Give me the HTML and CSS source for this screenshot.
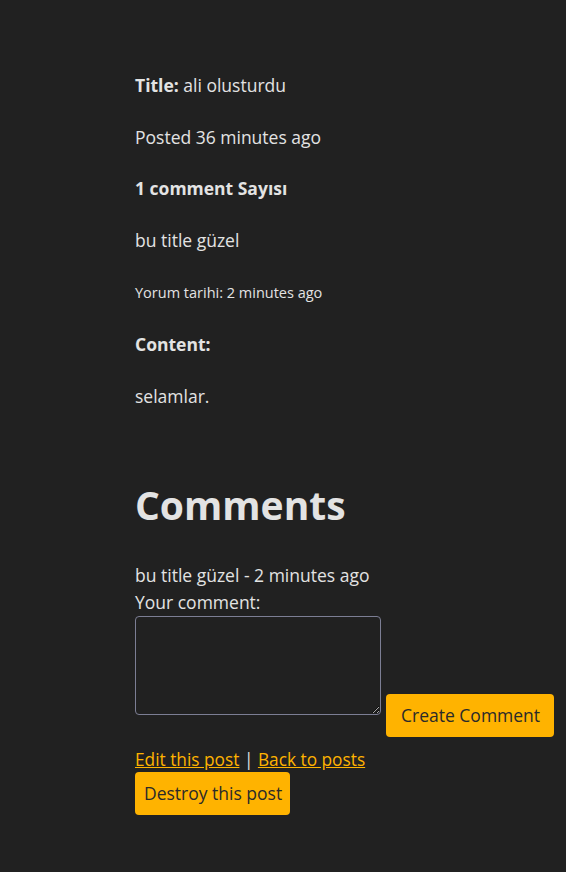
FILE: index.html
```html
<!DOCTYPE html>
<html lang="tr">
<head>
<meta charset="utf-8">
<title>Post</title>
<link rel="stylesheet" href="styles.css">
</head>
<body>
<main class="page">
  <div class="post">
    <p class="line"><strong>Title:</strong> ali olusturdu</p>
    <p class="line">Posted 36 minutes ago</p>
    <p class="line"><strong>1 comment Sayısı</strong></p>
    <p class="line">bu title güzel</p>
    <p class="line"><small class="small">Yorum tarihi: 2 minutes ago</small></p>
    <p class="line"><strong>Content:</strong></p>
    <p class="line">selamlar.</p>
  </div>

  <h1 class="heading">Comments</h1>

  <div class="comment">bu title güzel - 2 minutes ago</div>

  <form class="comment-form" onsubmit="return false">
    <label class="label" for="body">Your comment:</label>
    <div class="form-row">
      <textarea id="body" class="textarea"></textarea>
      <button type="submit" class="btn btn-submit">Create Comment</button>
    </div>
  </form>

  <div class="links">
    <a href="#" class="link">Edit this post</a> | <a href="#" class="link">Back to posts</a>
  </div>
  <button type="button" class="btn btn-destroy">Destroy this post</button>
</main>
</body>
</html>
```
FILE: styles.css
```css
html, body {
  margin: 0;
  padding: 0;
  background: #212121;
}
body {
  color: #e3e3e3;
  font-family: "Open Sans", "Noto Sans", sans-serif;
  font-size: 17.5px;
  line-height: 27px;
}
.page {
  padding: 72px 0 40px 135px;
}
.post {
  display: flex;
  flex-direction: column;
  gap: 24.6px;
}
.line {
  margin: 0;
}
.line strong {
  font-weight: 700;
}
.small {
  font-size: 14.5px;
}
.heading {
  margin: 67px 0 0;
  font-size: 39px;
  line-height: 56px;
  font-weight: 700;
  color: #e3e3e3;
}
.comment {
  margin-top: 29px;
}
.comment-form {
  margin: 0;
}
.label {
  display: block;
}
.form-row {
  display: flex;
  align-items: flex-start;
  gap: 5px;
}
.textarea {
  box-sizing: border-box;
  width: 246px;
  height: 99px;
  margin: 0;
  background: #212121;
  border: 1px solid #7c7e94;
  border-radius: 4px;
  color: #e3e3e3;
  resize: both;
}
.btn {
  display: block;
  margin: 0;
  height: 43px;
  border: 0;
  border-radius: 4px;
  background: #ffb300;
  color: #2a2a2a;
  font-family: inherit;
  font-size: 17.5px;
  cursor: pointer;
}
.btn-submit {
  margin-top: 78px;
  padding: 0 14px 0 15px;
}
.btn-destroy {
  margin-top: -1px;
  padding: 0 8px 0 9px;
}
.links {
  margin-top: 9px;
  font-size: 17.3px;
}
.link {
  color: #ffb300;
}
```
